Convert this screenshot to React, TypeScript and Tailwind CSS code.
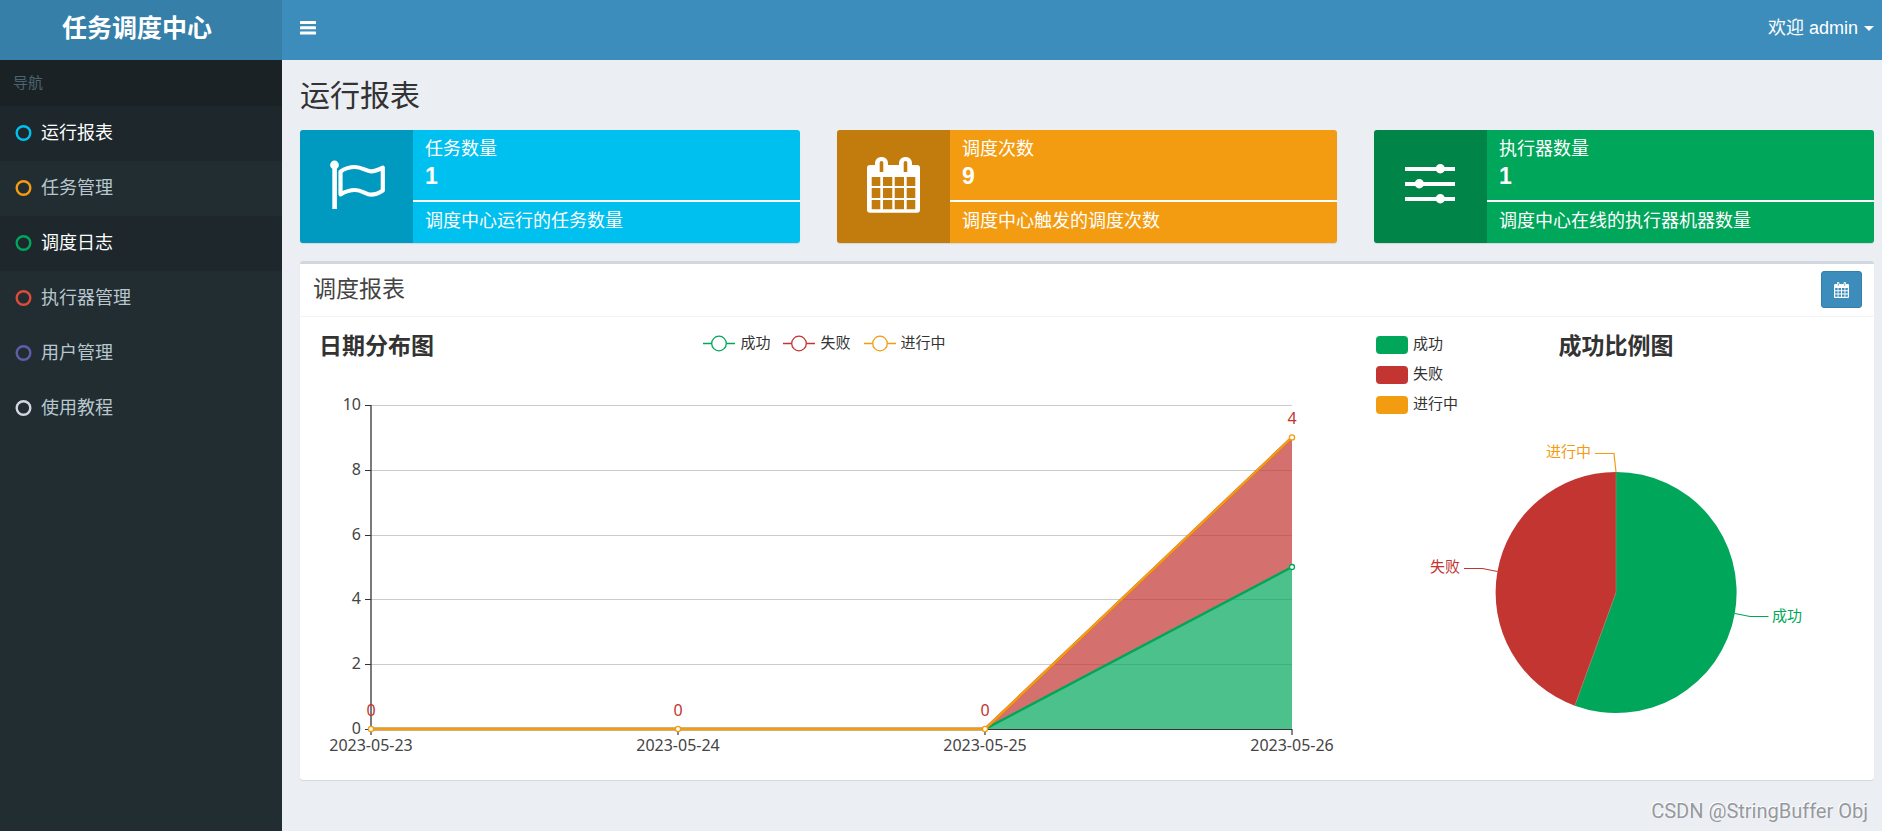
/**
 * Job scheduling console: sidebar, summary cards and the dispatch report charts
 */

import type { ReactNode } from 'react';
import clsx from 'clsx';

const GREEN = '#00a65a';
const RED = '#c23531';
const ORANGE = '#f39c12';

interface MenuItem {
  label: string;
  ring: string;
  active?: boolean;
}

const MENU: MenuItem[] = [
  { label: '运行报表', ring: '#00c0ef', active: true },
  { label: '任务管理', ring: '#f39c12' },
  { label: '调度日志', ring: '#00a65a', active: true },
  { label: '执行器管理', ring: '#dd4b39' },
  { label: '用户管理', ring: '#605ca8' },
  { label: '使用教程', ring: '#d2d6de' },
];

const SERIES = [
  { name: '成功', color: GREEN },
  { name: '失败', color: RED },
  { name: '进行中', color: ORANGE },
];

const DATES = ['2023-05-23', '2023-05-24', '2023-05-25', '2023-05-26'];
const SUCCESS = [0, 0, 0, 5];
const FAILED = [0, 0, 0, 4];

function BarsIcon() {
  return (
    <svg width="16" height="14" viewBox="0 0 16 14" fill="currentColor" aria-hidden="true">
      <rect x="0" y="0" width="16" height="3" rx="0.6" />
      <rect x="0" y="5.3" width="16" height="3" rx="0.6" />
      <rect x="0" y="10.6" width="16" height="3" rx="0.6" />
    </svg>
  );
}

function FlagIcon() {
  return (
    <svg viewBox="0 0 113 113" className="size-full" aria-hidden="true">
      <circle cx="34.5" cy="35" r="4.4" fill="#fff" />
      <rect x="32.3" y="36" width="4.6" height="43" fill="#fff" />
      <path
        d="M40.5 41.6C45 38.4 50 37 55 37C62 37 66 41.3 71 41.3C75.5 41.3 78.5 39.8 82.8 37.6V60.5C79 63 75.5 64.7 71 64.7C66 64.7 62 60 55 60C50 60 45.5 61.5 40.5 64.3Z"
        fill="none"
        stroke="#fff"
        strokeWidth="4.2"
        strokeLinejoin="round"
      />
    </svg>
  );
}

function CalendarIcon() {
  return (
    <svg viewBox="0 0 113 113" className="size-full" aria-hidden="true">
      <path
        fill="#fff"
        fillRule="evenodd"
        d="M33 35H38V33A6 6 0 0 1 44 27H45A6 6 0 0 1 51 33V35H62V33A6 6 0 0 1 68 27H69A6 6 0 0 1 75 33V35H80A3 3 0 0 1 83 38V79.7A3 3 0 0 1 80 82.7H33A3 3 0 0 1 30 79.7V38A3 3 0 0 1 33 35Z
        M42.7 32.5V42H46.3V32.5Q46.3 31 44.5 31Q42.7 31 42.7 32.5Z M66.7 32.5V42H70.3V32.5Q70.3 31 68.5 31Q66.7 31 66.7 32.5Z
        M34.7 47H43.3V56H34.7Z M46 47H55.3V56H46Z M57.7 47H67V56H57.7Z M69.7 47H78.3V56H69.7Z
        M34.7 58H43.3V68H34.7Z M46 58H55.3V68H46Z M57.7 58H67V68H57.7Z M69.7 58H78.3V68H69.7Z
        M34.7 70H43.3V79.3H34.7Z M46 70H55.3V79.3H46Z M57.7 70H67V79.3H57.7Z M69.7 70H78.3V79.3H69.7Z"
      />
    </svg>
  );
}

function SlidersIcon() {
  return (
    <svg viewBox="0 0 113 113" className="size-full" fill="#fff" aria-hidden="true">
      <rect x="31" y="37" width="50" height="4" />
      <rect x="31" y="52" width="50" height="4" />
      <rect x="31" y="67" width="50" height="4" />
      <circle cx="66.3" cy="38.7" r="4.7" />
      <circle cx="45.3" cy="53.7" r="4.7" />
      <circle cx="66.3" cy="68.7" r="4.7" />
    </svg>
  );
}

interface InfoCardProps {
  title: string;
  value: number;
  description: string;
  icon: ReactNode;
  className: string;
}

function InfoCard({ title, value, description, icon, className }: InfoCardProps) {
  return (
    <section className={clsx('flex h-[113px] overflow-hidden rounded-[3px] text-white shadow-[0_1px_1px_rgba(0,0,0,0.1)]', className)}>
      <div className="w-[113px] shrink-0 bg-black/20">{icon}</div>
      <div className="min-w-0 flex-1 pt-[6px]">
        <h2 className="pl-3 text-[18px] leading-[26px]">{title}</h2>
        <p className="pl-3 text-[23px] leading-7 font-bold">{value}</p>
        <div className="mt-[10px] h-[2px] bg-white" />
        <p className="truncate pt-[6px] pl-3 text-[18px] leading-[26px]">{description}</p>
      </div>
    </section>
  );
}

// Plot area of the line chart, in viewBox units
const LEFT = 71;
const RIGHT = 992;
const BASE = 354;
const UNIT = 32.4;

const px = (i: number) => LEFT + (i * (RIGHT - LEFT)) / (DATES.length - 1);
const py = (v: number) => BASE - v * UNIT;
const line = (values: number[]) => values.map((v, i) => `${px(i)},${py(v)}`).join(' ');

function LineChart() {
  const total = SUCCESS.map((v, i) => v + FAILED[i]);

  return (
    <figure>
      <div className="grid h-[58px] grid-cols-[1fr_auto_1fr] items-start pt-[13px] pl-[19px]">
        <h3 className="text-[23px] leading-8 font-bold text-[#333]">日期分布图</h3>
        <ul className="flex gap-[13px] pr-5 text-[15px] leading-[26px] text-[#333]">
          {SERIES.map((s) => (
            <li key={s.name} className="flex items-center gap-[5px]">
              <svg width="32" height="18" viewBox="0 0 32 18" aria-hidden="true">
                <path d="M0 9.5H32" stroke={s.color} strokeWidth="1.5" />
                <circle cx="16" cy="9.5" r="7.3" fill="#fff" stroke={s.color} strokeWidth="1.3" />
              </svg>
              {s.name}
            </li>
          ))}
        </ul>
      </div>
      <svg viewBox="0 0 1050 405" className="block w-full font-['Noto_Sans',sans-serif] text-[16px]">
        {[0, 2, 4, 6, 8, 10].map((v) => {
          const y = Math.round(py(v)) + 0.5;
          return (
            <g key={v}>
              {v > 0 && <path d={`M${LEFT} ${y}H${RIGHT}`} stroke="#ccc" />}
              <path d={`M${LEFT - 6} ${y}H${LEFT}`} stroke="#333" />
              <text x={LEFT - 10} y={y + 4} textAnchor="end" fill="#444">
                {v}
              </text>
            </g>
          );
        })}
        <path d={`M${LEFT} 30V${BASE}`} stroke="#333" strokeWidth="1.3" />
        <path d={`M${LEFT} ${BASE + 0.5}H${RIGHT}`} stroke="#333" />
        {DATES.map((d, i) => (
          <g key={d}>
            <path d={`M${px(i)} ${BASE}v6`} stroke="#333" strokeWidth="1.2" />
            <text x={px(i)} y={BASE + 22} textAnchor="middle" fill="#444">
              {d}
            </text>
          </g>
        ))}

        <polygon points={`${px(2)},${BASE} ${px(3)},${py(5)} ${px(3)},${BASE}`} fill={GREEN} fillOpacity="0.7" />
        <polygon points={`${px(2)},${BASE} ${px(3)},${py(9)} ${px(3)},${py(5)}`} fill={RED} fillOpacity="0.7" />
        <polyline points={line(SUCCESS)} fill="none" stroke={GREEN} strokeWidth="2.5" />
        <polyline points={line(total)} fill="none" stroke={RED} strokeWidth="2.5" />
        <polyline points={line(total)} fill="none" stroke={ORANGE} strokeWidth="2.5" />
        <circle cx={px(3)} cy={py(5)} r="2.5" fill="#fff" stroke={GREEN} strokeWidth="1.3" />
        {total.map((v, i) => (
          <g key={DATES[i]}>
            <circle cx={px(i)} cy={py(v)} r="2.6" fill="#fff" stroke={ORANGE} strokeWidth="1.3" />
            <text x={px(i)} y={py(v) - 13} textAnchor="middle" fill={RED}>
              {FAILED[i]}
            </text>
          </g>
        ))}
      </svg>
    </figure>
  );
}

function PieChart() {
  return (
    <figure>
      <div className="grid grid-cols-[1fr_auto_1fr] pr-[18px] pl-[26px]">
        <ul className="flex flex-col gap-[12px] pt-[19px] text-[15px] leading-[18px] text-[#333]">
          {SERIES.map((s) => (
            <li key={s.name} className="flex gap-[5px]">
              <span className="h-[18px] w-8 rounded-[4px]" style={{ backgroundColor: s.color }} />
              <span className="-mt-px">{s.name}</span>
            </li>
          ))}
        </ul>
        <h3 className="pt-[13px] text-[23px] leading-8 font-bold text-[#333]">成功比例图</h3>
      </div>
      <svg viewBox="0 0 524 366" className="block w-full font-['Noto_Sans_CJK_SC',sans-serif] text-[15px]">
        <path d="M266 178.5V58A120.5 120.5 0 1 1 224.8 291.7Z" fill={GREEN} />
        <path d="M266 178.5L224.8 291.7A120.5 120.5 0 0 1 266 58Z" fill={RED} />
        <path d="M266 58V178.5L224.8 291.7" fill="none" stroke="#a08060" strokeWidth="0.7" />
        <path d="M385 199.5L400 202.5H418.5" fill="none" stroke={GREEN} strokeWidth="1.2" />
        <path d="M147.5 157.5L132.5 154.5H114" fill="none" stroke={RED} strokeWidth="1.2" />
        <path d="M266 58L264 39.5H245" fill="none" stroke={ORANGE} strokeWidth="1.2" />
        <text x="422" y="207" fill={GREEN}>成功</text>
        <text x="110" y="158" textAnchor="end" fill={RED}>失败</text>
        <text x="241" y="43" textAnchor="end" fill={ORANGE}>进行中</text>
      </svg>
    </figure>
  );
}

export default function App() {
  return (
    <div className="flex min-h-screen bg-[#ebeef3] font-['Liberation_Sans','Noto_Sans_CJK_SC',sans-serif]">
      <aside className="w-[282px] shrink-0 bg-[#222d32]">
        <a href="#" className="block h-[60px] bg-[#367fa9] text-center text-[25px] leading-[57px] font-bold text-white">
          <span className="pr-2">任务调度中心</span>
        </a>
        <nav>
          <h2 className="bg-[#1a2226] pl-[13px] text-[15px] leading-[46px] text-[#4b646f]">导航</h2>
          <ul>
            {MENU.map((item) => (
              <li key={item.label}>
                <a
                  href="#"
                  className={clsx(
                    'flex h-[55px] items-center gap-[9px] pl-[15px] text-[18px]',
                    item.active ? 'bg-[#1e272c] text-white' : 'text-[#b8c7ce]',
                  )}
                >
                  <svg width="17" height="17" viewBox="0 0 17 17" aria-hidden="true">
                    <circle cx="8.5" cy="8" r="6.8" fill="none" stroke={item.ring} strokeWidth="2.4" />
                  </svg>
                  {item.label}
                </a>
              </li>
            ))}
          </ul>
        </nav>
      </aside>

      <div className="flex min-w-0 flex-1 flex-col">
        <header className="flex h-[60px] items-center justify-between bg-[#3c8dbc] pr-2 pb-[4px] pl-[18px] text-white">
          <button type="button" aria-label="menu">
            <BarsIcon />
          </button>
          <button type="button" className="flex items-center gap-[6px] text-[18px]">
            欢迎 admin
            <svg width="10" height="5" viewBox="0 0 10 5" fill="currentColor" aria-hidden="true">
              <path d="M0 0H10L5 5Z" />
            </svg>
          </button>
        </header>

        <main className="flex-1 pr-2 pl-[18px]">
          <h1 className="pt-[18px] pb-[16px] text-[30px] leading-9 text-[#333]">运行报表</h1>

          <div className="grid grid-cols-3 gap-[37px]">
            <InfoCard
              title="任务数量"
              value={1}
              description="调度中心运行的任务数量"
              icon={<FlagIcon />}
              className="bg-[#00c0ef]"
            />
            <InfoCard
              title="调度次数"
              value={9}
              description="调度中心触发的调度次数"
              icon={<CalendarIcon />}
              className="bg-[#f39c12]"
            />
            <InfoCard
              title="执行器数量"
              value={1}
              description="调度中心在线的执行器机器数量"
              icon={<SlidersIcon />}
              className="bg-[#00a65a]"
            />
          </div>

          <section className="mt-[18px] rounded-[3px] border-t-[3px] border-[#d2d6de] bg-white shadow-[0_1px_1px_rgba(0,0,0,0.1)]">
            <div className="flex h-[53px] items-start justify-between border-b border-[#f4f4f4] pt-[7px] pr-3 pl-[13px]">
              <h2 className="text-[23px] leading-[37px] text-[#444]">调度报表</h2>
              <button
                type="button"
                aria-label="date range"
                className="flex h-[37px] w-[41px] items-center justify-center rounded-[3px] border border-[#367fa9] bg-[#3c8dbc]"
              >
                <svg width="15" height="16" viewBox="0 0 15 16" aria-hidden="true">
                  <path
                    fill="#fff"
                    fillRule="evenodd"
                    d="M1 2H3V1.2A1.2 1.2 0 0 1 5.4 1.2V2H9.6V1.2A1.2 1.2 0 0 1 12 1.2V2H14A1 1 0 0 1 15 3V15A1 1 0 0 1 14 16H1A1 1 0 0 1 0 15V3A1 1 0 0 1 1 2Z
                    M3.8 1.3H4.6V3.8H3.8Z M10.4 1.3H11.2V3.8H10.4Z
                    M1.2 6H3.6V8.3H1.2Z M4.5 6H7V8.3H4.5Z M8 6H10.5V8.3H8Z M11.4 6H13.8V8.3H11.4Z
                    M1.2 9.2H3.6V11.6H1.2Z M4.5 9.2H7V11.6H4.5Z M8 9.2H10.5V11.6H8Z M11.4 9.2H13.8V11.6H11.4Z
                    M1.2 12.5H3.6V14.8H1.2Z M4.5 12.5H7V14.8H4.5Z M8 12.5H10.5V14.8H8Z M11.4 12.5H13.8V14.8H11.4Z"
                  />
                </svg>
              </button>
            </div>
            <div className="grid grid-cols-[1050fr_524fr]">
              <LineChart />
              <PieChart />
            </div>
          </section>

          <p className="pt-[18px] pr-[6px] text-right font-[Roboto,sans-serif] text-[20px] leading-[26px] text-[#96999d] [text-shadow:-1px_-1px_0_#fff]">
            CSDN @StringBuffer Obj
          </p>
        </main>
      </div>
    </div>
  );
}
